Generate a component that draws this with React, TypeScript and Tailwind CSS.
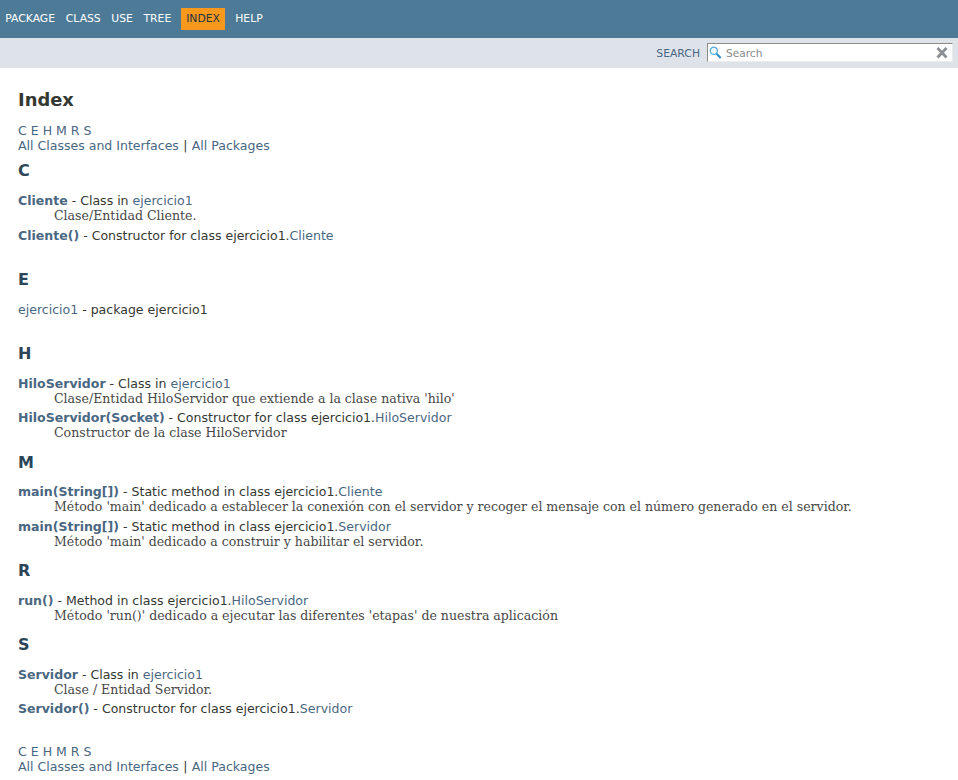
import React from "react";

const link = "text-[#4A6782]";

type Entry = {
  name: string;
  plain?: boolean;
  text: string;
  target?: string;
  desc?: string;
};

type Section = { letter: string; entries: Entry[] };

const sections: Section[] = [
  {
    letter: "C",
    entries: [
      { name: "Cliente", text: " - Class in ", target: "ejercicio1", desc: "Clase/Entidad Cliente." },
      { name: "Cliente()", text: " - Constructor for class ejercicio1.", target: "Cliente" },
    ],
  },
  { letter: "E", entries: [{ name: "ejercicio1", plain: true, text: " - package ejercicio1" }] },
  {
    letter: "H",
    entries: [
      {
        name: "HiloServidor",
        text: " - Class in ",
        target: "ejercicio1",
        desc: "Clase/Entidad HiloServidor que extiende a la clase nativa 'hilo'",
      },
      {
        name: "HiloServidor(Socket)",
        text: " - Constructor for class ejercicio1.",
        target: "HiloServidor",
        desc: "Constructor de la clase HiloServidor",
      },
    ],
  },
  {
    letter: "M",
    entries: [
      {
        name: "main(String[])",
        text: " - Static method in class ejercicio1.",
        target: "Cliente",
        desc: "Método 'main' dedicado a establecer la conexión con el servidor y recoger el mensaje con el número generado en el servidor.",
      },
      {
        name: "main(String[])",
        text: " - Static method in class ejercicio1.",
        target: "Servidor",
        desc: "Método 'main' dedicado a construir y habilitar el servidor.",
      },
    ],
  },
  {
    letter: "R",
    entries: [
      {
        name: "run()",
        text: " - Method in class ejercicio1.",
        target: "HiloServidor",
        desc: "Método 'run()' dedicado a ejecutar las diferentes 'etapas' de nuestra aplicación",
      },
    ],
  },
  {
    letter: "S",
    entries: [
      { name: "Servidor", text: " - Class in ", target: "ejercicio1", desc: "Clase / Entidad Servidor." },
      { name: "Servidor()", text: " - Constructor for class ejercicio1.", target: "Servidor" },
    ],
  },
];

function IndexLinks() {
  return (
    <div className="leading-[15px]">
      <div className={link}>C E H M R S</div>
      <div>
        <a className={link}>All Classes and Interfaces</a>
        <span className="mx-[0.3px]"> | </span>
        <a className={link}>All Packages</a>
      </div>
    </div>
  );
}

export default function App() {
  return (
    <div className="h-[780px] overflow-hidden bg-white font-['DejaVu_Sans',sans-serif] text-[12.54px] text-[#353833]">
      <nav className="flex h-[38px] items-start bg-[#4D7A97] pt-2 text-[10.8px] leading-[22px] text-white">
        <span className="ml-[5.2px]">PACKAGE</span>
        <span className="ml-[10.8px]">CLASS</span>
        <span className="ml-[10.6px]">USE</span>
        <span className="ml-[10.6px]">TREE</span>
        <span className="ml-[9.8px] w-[44px] bg-[#F8981D] text-center text-[#253441]">INDEX</span>
        <span className="ml-[10.2px]">HELP</span>
      </nav>
      <div className="flex h-[30px] items-center justify-end bg-[#dee3e9] pr-[5px] text-[10.8px]">
        <span className={"mr-[7px] pt-[2px] " + link}>SEARCH</span>
        <div className="mb-px flex h-[19px] w-[246px] items-center border border-t-[#8b8b8b] border-r-[#ececec] border-b-[#ececec] border-l-[#8b8b8b] bg-white pl-px pr-[4px]">
          <svg width="13" height="13" viewBox="0 0 13 13" fill="none">
            <path d="M7.2 7.4 L11.7 12" stroke="#2b8fc6" strokeWidth="2" />
            <circle cx="4.8" cy="4.8" r="3.6" fill="#eef8ff" stroke="#58a9d8" strokeWidth="1.2" />
          </svg>
          <span className="ml-[4px] pt-px text-[10.6px] leading-[14px] text-[#8a8a8a]">Search</span>
          <svg className="ml-auto" width="12" height="12" viewBox="0 0 12 12">
            <path d="M1.5 1 L10.5 10.5 M10.5 1 L1.5 10.5" stroke="#8b9094" strokeWidth="2.8" />
          </svg>
        </div>
      </div>
      <main className="px-[18px] pt-[21px]">
        <h1 className="mb-[13px] text-[17.9px] font-bold leading-[21px]">Index</h1>
        <IndexLinks />
        <div className="pt-[0.6px]">
          {sections.map((s) => (
            <section key={s.letter} className="group">
              <h2 className="pt-[8.1px] text-[16px] font-bold leading-[19px] text-[#2c4557] group-first:pt-[7.7px]">
                {s.letter}
              </h2>
              <dl className="pt-[12.4px] group-first:pt-[12.8px]">
                {s.entries.map((e, i) => (
                  <React.Fragment key={i}>
                    <dt className="leading-[15px]">
                      <a className={e.plain ? link : "font-bold " + link}>{e.name}</a>
                      {e.text}
                      {e.target && <a className={link}>{e.target}</a>}
                    </dt>
                    <dd className="mb-[4.5px] ml-9 min-h-[15px] font-['DejaVu_Serif',serif] leading-[15px] text-[#474747]">
                      {e.desc}
                    </dd>
                  </React.Fragment>
                ))}
              </dl>
            </section>
          ))}
        </div>
        <div className="pt-[8.6px]">
          <IndexLinks />
        </div>
      </main>
    </div>
  );
}
